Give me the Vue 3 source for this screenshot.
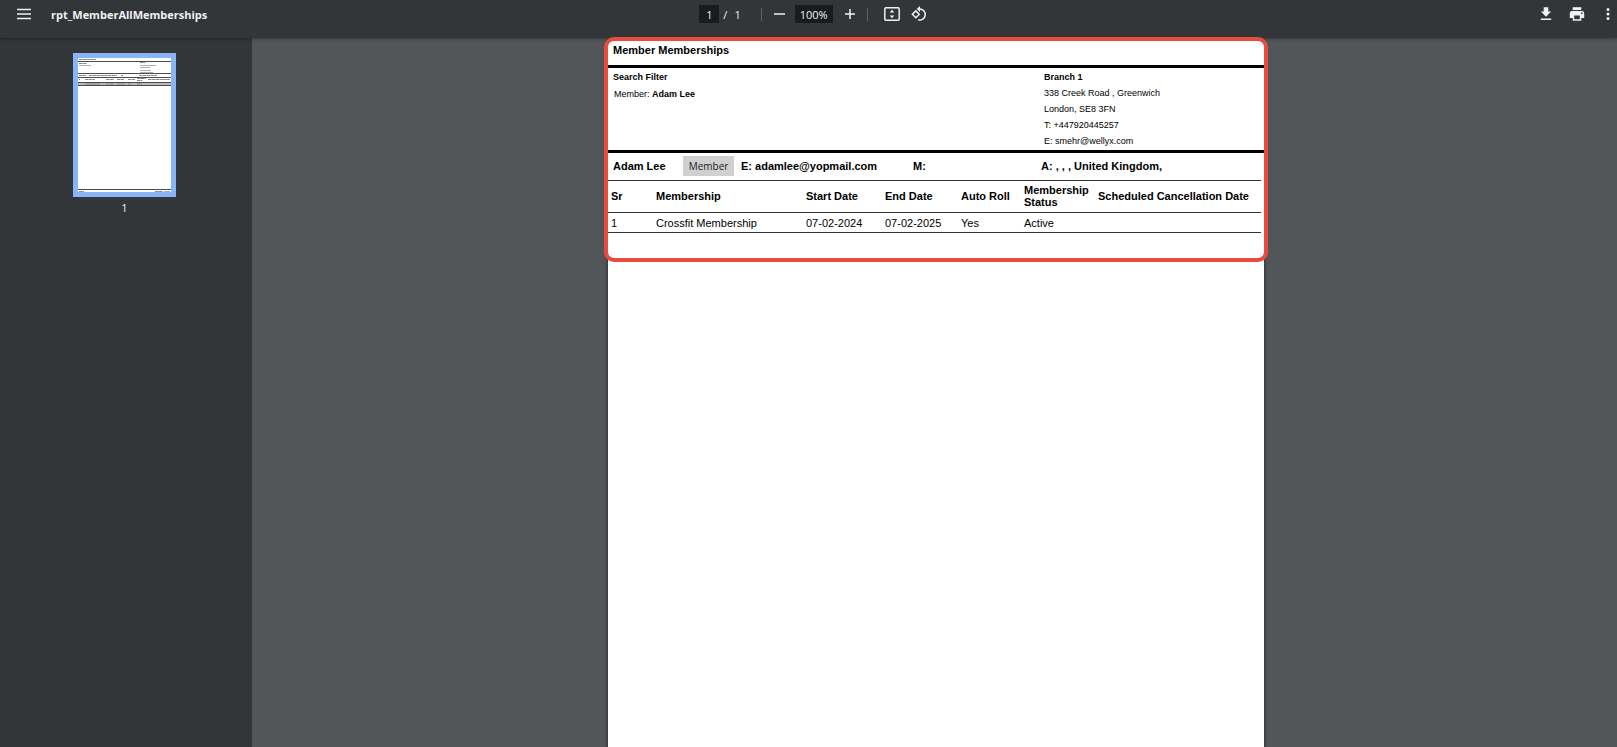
<script setup>
import { ref } from 'vue'

const pageNumber = ref('1')
const zoomLevel = ref('100%')

const columns = [
  { key: 'sr', label: 'Sr' },
  { key: 'name', label: 'Membership' },
  { key: 'start', label: 'Start Date' },
  { key: 'end', label: 'End Date' },
  { key: 'roll', label: 'Auto Roll' },
  { key: 'status', label: 'Membership Status' },
  { key: 'cancel', label: 'Scheduled Cancellation Date' },
]

const rows = [
  { sr: '1', name: 'Crossfit Membership', start: '07-02-2024', end: '07-02-2025', roll: 'Yes', status: 'Active', cancel: '' },
]
</script>

<template>
  <div class="viewer">
    <header class="toolbar">
      <div class="side start">
        <button class="icon-btn" type="button" aria-label="Menu">
          <svg width="16" height="16" viewBox="0 0 16 16"><path d="M1 3.5h14M1 8h14M1 12.5h14" stroke="#f1f1f1" stroke-width="1.6" /></svg>
        </button>
        <h1 class="file-name">rpt_MemberAllMemberships</h1>
      </div>

      <div class="controls">
        <input v-model="pageNumber" class="field page-field" type="text" aria-label="Page number" />
        <span class="slash">/</span>
        <span class="total">1</span>
        <span class="divider"></span>
        <button class="icon-btn" type="button" aria-label="Zoom out">
          <svg width="16" height="16" viewBox="0 0 16 16"><path d="M3 8h11" stroke="#f1f1f1" stroke-width="1.5" /></svg>
        </button>
        <input v-model="zoomLevel" class="field zoom-field" type="text" aria-label="Zoom level" />
        <button class="icon-btn" type="button" aria-label="Zoom in">
          <svg width="16" height="16" viewBox="0 0 16 16"><path d="M3 8h10M8 3v10" stroke="#f1f1f1" stroke-width="1.5" /></svg>
        </button>
        <span class="divider"></span>
        <div class="view-tools">
          <button class="icon-btn" type="button" aria-label="Fit to page">
            <svg width="16" height="16" viewBox="0 0 16 16">
              <rect x="0.8" y="1.8" width="14.4" height="12.4" rx="1.2" fill="none" stroke="#f1f1f1" stroke-width="1.5" />
              <path d="M8 3.8L10.3 6.6H5.7zM8 12.2L5.7 9.4h4.6z" fill="#f1f1f1" />
            </svg>
          </button>
          <button class="icon-btn" type="button" aria-label="Rotate counterclockwise">
            <svg width="16" height="16" viewBox="0 0 16 16">
              <path d="M4.8 4.9L8.2 8.3 4.8 11.7 1.4 8.3z" fill="none" stroke="#f1f1f1" stroke-width="1.5" />
              <path d="M8.4 2.9a5.6 5.6 0 1 1-1.2 11" fill="none" stroke="#f1f1f1" stroke-width="1.5" />
              <path d="M9 0v6L5.7 3z" fill="#f1f1f1" />
            </svg>
          </button>
        </div>
      </div>

      <div class="side end">
        <button class="icon-btn" type="button" aria-label="Download">
          <svg width="16" height="16" viewBox="0 0 16 16"><path d="M5.7 1.2h4.6v4.3h2.9L8 10.700 2.800 5.500h2.900zM2.800 12.500h10.400v1.500H2.800z" fill="#f1f1f1" /></svg>
        </button>
        <button class="icon-btn" type="button" aria-label="Print">
          <svg width="16" height="16" viewBox="0 0 16 16">
            <path d="M3.700 1.200h8.600v2.800H3.700z" fill="#f1f1f1" />
            <path fill-rule="evenodd" d="M3 5h10a2.200 2.200 0 0 1 2.200 2.200V12h-2.900v2.800H3.700V12H.8V7.200A2.200 2.200 0 0 1 3 5zM5.200 9.400v3.900h5.600V9.400zM12.200 6.500v1.400h1.400V6.500z" fill="#f1f1f1" />
          </svg>
        </button>
        <button class="icon-btn" type="button" aria-label="More actions">
          <svg width="16" height="16" viewBox="0 0 16 16"><g fill="#f1f1f1"><circle cx="8" cy="3.500" r="1.500" /><circle cx="8" cy="8" r="1.500" /><circle cx="8" cy="12.500" r="1.500" /></g></svg>
        </button>
      </div>
    </header>

    <div class="body">
      <nav class="sidebar" aria-label="Pages">
        <a class="thumb-link" href="#page-1">
          <svg class="thumb" width="93" height="134" viewBox="0 0 93 134" aria-hidden="true">
            <rect width="93" height="134" fill="#fff" />
            <g stroke="#4c4c50" stroke-width="1">
              <path d="M0 3.500h93M0 15.500h93M0 19.500h93M0 131.500h93" />
            </g>
            <path d="M0 26h93" stroke="#b9b9b9" stroke-width="3" />
            <g stroke="#888" stroke-width="1" stroke-dasharray="3.500 0.300">
              <path d="M1 1.500h17M1 5.500h8M62 4.500h5M1 17.500h7M11 17.500h28M43 17.500h2M61 17.500h18" />
              <path d="M1 21.500h1M7 21.500h10M28 21.500h8M39 21.500h7M50 21.500h7M59 20.500h9M59 22.500h5M70 21.500h22" />
              <path d="M7 26h15M28 26h8M39 26h8M50 26h3M59 26h5M1 133.500h5M77 133.500h8" />
            </g>
            <g stroke="#b3b3b3" stroke-width="1">
              <path d="M1 7.500h12M62 7.500h16M62 9.500h10M62 12.500h11M62 14.500h13" />
            </g>
            <path d="M86 133.500h6" stroke="#7cb5e8" />
            <path d="M0 24.500h93M0 27.500h93" stroke="#4c4c50" />
          </svg>
          <span class="thumb-number">1</span>
        </a>
      </nav>

      <main class="canvas">
        <article id="page-1" class="sheet">
          <h2 class="report-title">Member Memberships</h2>

          <section class="info">
            <div class="filter">
              <h3>Search Filter</h3>
              <p>Member: <b>Adam Lee</b></p>
            </div>
            <address class="branch">
              <h3>Branch 1</h3>
              <p>338 Creek Road , Greenwich</p>
              <p>London, SE8 3FN</p>
              <p>T: +447920445257</p>
              <p>E: smehr@wellyx.com</p>
            </address>
          </section>

          <section class="member">
            <span>Adam Lee</span>
            <span class="badge">Member</span>
            <span>E: adamlee@yopmail.com</span>
            <span>M:</span>
            <span>A: , , , United Kingdom,</span>
          </section>

          <table class="memberships">
            <colgroup>
              <col v-for="c in columns" :key="c.key" :class="'col-' + c.key" />
            </colgroup>
            <thead>
              <tr><th v-for="c in columns" :key="c.key" scope="col">{{ c.label }}</th></tr>
            </thead>
            <tbody>
              <tr v-for="r in rows" :key="r.sr">
                <td v-for="c in columns" :key="c.key">{{ r[c.key] }}</td>
              </tr>
            </tbody>
          </table>
          <div class="highlight"></div>
        </article>
      </main>
    </div>
  </div>
</template>

<style>
html,
body {
  margin: 0;
  background: #525659;
}
</style>

<style scoped>
* {
  box-sizing: border-box;
}
.viewer {
  display: flex;
  flex-direction: column;
  height: 100vh;
  overflow: hidden;
  font-family: "Open Sans", "Noto Sans", sans-serif;
  font-size: 11px;
  color: #f1f1f1;
}
.toolbar {
  position: relative;
  z-index: 1;
  display: grid;
  grid-template-columns: 1fr auto 1fr;
  align-items: center;
  flex: none;
  height: 38px;
  padding: 0 1px 10px 16px;
  background: #323639;
  box-shadow: 0 1px 3px rgba(0, 0, 0, 0.35);
}
.side {
  display: flex;
  align-items: center;
}
.end {
  justify-content: flex-end;
  gap: 15px;
}
.icon-btn {
  display: flex;
  padding: 0;
  border: 0;
  background: none;
}
.file-name {
  margin: 0 0 0 19px;
  padding-top: 2px;
  font-size: 11px;
  font-weight: 700;
  line-height: 16px;
}
.controls {
  display: flex;
  align-items: center;
  padding-right: 6px;
}
.field {
  height: 18px;
  padding: 0;
  border: 0;
  background: #191b1c;
  color: #f1f1f1;
  font: inherit;
  text-align: center;
}
.page-field {
  width: 20px;
}
.slash {
  margin: 0 7px 0 4px;
}
.divider {
  width: 1px;
  height: 13px;
  background: #5f6366;
}
.total + .divider {
  margin: 0 9px 0 20px;
}
.zoom-field {
  width: 38px;
  margin: 0 9px 0 8px;
}
.icon-btn + .divider {
  margin: 0 16px 0 9px;
}
.view-tools {
  display: flex;
  gap: 11px;
}
.body {
  display: flex;
  flex: 1;
  min-height: 0;
}
.sidebar {
  flex: none;
  width: 252px;
  padding-top: 15px;
  background: #323639;
}
.thumb-link {
  display: flex;
  flex-direction: column;
  align-items: center;
  padding-right: 3px;
  color: inherit;
  text-decoration: none;
}
.thumb {
  box-sizing: content-box;
  border: 5px solid #8ab4f8;
}
.thumb-number {
  margin-top: 3px;
  line-height: 16px;
}
.canvas {
  flex: 1;
  padding: 3px 0 0 3px;
  background: #525659;
}
.sheet {
  position: relative;
  width: 656px;
  min-height: 927px;
  margin: 0 auto;
  background: #fff;
  box-shadow: 0 0 3px 1px rgba(0, 0, 0, 0.4);
  color: #000;
  font-family: "Liberation Sans", Arial, sans-serif;
  font-size: 11px;
}
.report-title {
  height: 27px;
  margin: 0;
  padding: 1px 5px;
  border-bottom: 3px solid #000;
  font-size: 11px;
  line-height: 16px;
}
.info {
  display: flex;
  justify-content: space-between;
  height: 85px;
  padding: 1px 0 0 5px;
  border-bottom: 3px solid #000;
  font-size: 9px;
  line-height: 16px;
}
.info h3,
.info p {
  margin: 0;
  font-size: 9px;
}
.filter p {
  padding: 1px;
}
.branch {
  width: 220px;
  font-style: normal;
}
.member {
  display: grid;
  grid-template-columns: 70px 58px 172px 128px 1fr;
  align-items: center;
  width: 653px;
  height: 28px;
  padding: 0 0 2px 5px;
  border-bottom: 1px solid #333;
  font-weight: 700;
}
.badge {
  width: 51px;
  background: #d0d0d0;
  color: #222;
  font-family: "Open Sans", "Noto Sans", sans-serif;
  font-size: 10px;
  font-weight: 400;
  line-height: 20px;
  text-align: center;
}
.memberships {
  width: 653px;
  border-collapse: separate;
  border-spacing: 0;
  table-layout: fixed;
}
.memberships th,
.memberships td {
  padding: 0 0 0 3px;
  border-bottom: 1px solid #333;
  text-align: left;
}
.memberships th {
  height: 32px;
  padding-bottom: 1px;
  line-height: 12px;
}
.memberships td {
  height: 20px;
}
.col-sr { width: 45px; }
.col-name { width: 150px; }
.col-start { width: 79px; }
.col-end { width: 76px; }
.col-roll { width: 63px; }
.col-status { width: 74px; }
.highlight {
  position: absolute;
  z-index: 2;
  top: -4px;
  right: -4px;
  left: -4px;
  height: 225px;
  border: 4px solid #e74c3c;
  border-radius: 10px;
  pointer-events: none;
}
</style>
